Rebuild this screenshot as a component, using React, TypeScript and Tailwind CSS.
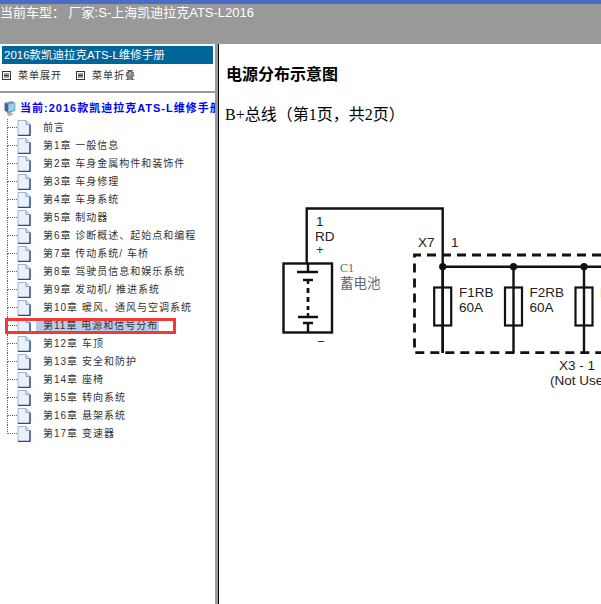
const cn = '"Liberation Sans", "Noto Sans CJK SC", sans-serif';
const serif = '"Liberation Serif", "Noto Sans CJK SC", serif';

const chapters = [
  '前言',
  '第1章 一般信息',
  '第2章 车身金属构件和装饰件',
  '第3章 车身修理',
  '第4章 车身系统',
  '第5章 制动器',
  '第6章 诊断概述、起始点和编程',
  '第7章 传动系统/ 车桥',
  '第8章 驾驶员信息和娱乐系统',
  '第9章 发动机/ 推进系统',
  '第10章 暖风、通风与空调系统',
  '第11章 电源和信号分布',
  '第12章 车顶',
  '第13章 安全和防护',
  '第14章 座椅',
  '第15章 转向系统',
  '第16章 悬架系统',
  '第17章 变速器',
];

function PageIcon() {
  return (
    <svg width="14" height="16" viewBox="0 0 14 16" className="shrink-0">
      <path d="M1 .5H9L13 4.5V15.5H1Z" fill="#eaf1fb" stroke="#9db4dc" />
      <path d="M13 4.5V15.5H1" fill="none" stroke="#2c4a86" strokeWidth="1.4" />
      <path d="M9 .5V4.5H13" fill="#c9d9f2" stroke="#8aa3d0" />
    </svg>
  );
}

function ComputerIcon() {
  return (
    <svg width="14" height="16" viewBox="0 0 14 18" className="shrink-0">
      <path d="M1 2L9 0L13 2V11L5 14L1 11Z" fill="#7c95b8" />
      <path d="M5 4L12 2.5V10L5 12Z" fill="#8fd0f5" />
      <path d="M1 2L5 4V12L1 11Z" fill="#4d6488" />
      <path d="M3 14L8 13L11 15L6 17.5Z" fill="#a4b2c6" />
    </svg>
  );
}

function MenuIcon() {
  return (
    <svg width="9" height="9" viewBox="0 0 9 9" className="shrink-0">
      <rect x=".5" y=".5" width="8" height="8" fill="#fff" stroke="#333" />
      <path d="M2 3H7M2 4.5H7M2 6H7" stroke="#333" />
    </svg>
  );
}

function TreeRow({ label, last, selected }: { label: string; last: boolean; selected: boolean }) {
  return (
    <li className="flex h-[18px] items-center">
      <div className="h-[18px] w-[10px] shrink-0">
        <div className="h-[9px] border-b border-l border-dotted border-[#666]" />
        {!last && <div className="h-[9px] border-l border-dotted border-[#666]" />}
      </div>
      <PageIcon />
      <span
        className={`ml-[5px] h-[14px] whitespace-nowrap pl-[7px] pr-[1px] text-[10px] leading-[14px] tracking-[1px] text-[#333] ${
          selected ? 'bg-[#b9cde6]' : ''
        }`}
      >
        {label}
      </span>
    </li>
  );
}

function Fuse({ x }: { x: number }) {
  return (
    <g>
      <path d={`M${x} 267V353`} stroke="#111" strokeWidth="2.4" fill="none" />
      <rect x={x - 8.5} y="287.5" width="17" height="38" fill="none" stroke="#111" strokeWidth="2.2" />
      <circle cx={x} cy="266.7" r="3.6" fill="#111" />
    </g>
  );
}

function Diagram() {
  return (
    <svg width="382" height="200" viewBox="219 200 382 200" className="block" fontFamily={cn}>
      {/* battery */}
      <path d="M306.7 263V208.5H442.7V353" stroke="#111" strokeWidth="2.4" fill="none" />
      <rect x="283.5" y="263.5" width="48.5" height="69" fill="none" stroke="#111" strokeWidth="2.4" />
      <path d="M297 272H318M303 280H313M308 263V272M308 280V284" stroke="#111" strokeWidth="2.4" fill="none" />
      <path d="M308 288V310" stroke="#111" strokeWidth="2.8" strokeDasharray="5 4" fill="none" />
      <path d="M298 317H318M303 323H313M308 313V317M308 323V332" stroke="#111" strokeWidth="2.4" fill="none" />
      <text x="316" y="226" fontSize="13.5" fill="#222">1</text>
      <text x="315" y="240.5" fontSize="13.5" fill="#222">RD</text>
      <text x="316" y="254" fontSize="13" fill="#333">+</text>
      <text x="317" y="346" fontSize="13" fill="#333">−</text>
      <text x="340" y="272" fontSize="12" fill="#666" fontFamily={serif}>C1</text>
      <text x="340" y="288" fontSize="13.5" fill="#666" fontFamily={serif}>蓄电池</text>
      {/* fuse box */}
      <path d="M601 255H414.5V352.7H601" stroke="#111" strokeWidth="2.8" strokeDasharray="9 6" fill="none" />
      <path d="M442.7 266.7H601" stroke="#111" strokeWidth="2.4" fill="none" />
      <Fuse x={442.7} />
      <Fuse x={513.5} />
      <Fuse x={584} />
      <text x="418" y="247" fontSize="13.5" fill="#222">X7</text>
      <text x="451" y="247" fontSize="13.5" fill="#222">1</text>
      <text x="459" y="297" fontSize="13.5" fill="#222">F1RB</text>
      <text x="459" y="312" fontSize="13.5" fill="#222">60A</text>
      <text x="529.5" y="297" fontSize="13.5" fill="#222">F2RB</text>
      <text x="529.5" y="312" fontSize="13.5" fill="#222">60A</text>
      <text x="600" y="297" fontSize="13.5" fill="#222">F3RB</text>
      <text x="559" y="370" fontSize="13.5" fill="#222">X3 - 1</text>
      <text x="550" y="385" fontSize="13.5" fill="#222">(Not Used)</text>
    </svg>
  );
}

export default function App() {
  return (
    <div className="relative flex h-[604px] w-[601px] flex-col overflow-hidden bg-white" style={{ fontFamily: cn }}>
      {/* top bar */}
      <header className="h-[44px] shrink-0 bg-[#999999]">
        <div className="h-[4px] bg-[#4a6cc4]" />
        <div className="whitespace-nowrap text-[13px] leading-[17px] text-white">当前车型： 厂家:S-上海凯迪拉克ATS-L2016</div>
      </header>

      <div className="flex min-h-0 flex-1">
        {/* left menu */}
        <aside className="w-[215px] shrink-0 overflow-hidden pt-[2px]">
          <div className="mx-[2px] h-[18px] whitespace-nowrap bg-[#006699] pl-[2px] text-[11.5px] font-normal leading-[18px] text-white">
            2016款凯迪拉克ATS-L维修手册
          </div>
          <div className="flex h-[29px] items-center border-b-2 border-[#999] pb-[5px] pl-[2px] text-[10px] tracking-[1px] text-[#333]">
            <MenuIcon />
            <span className="ml-[7px]">菜单展开</span>
            <span className="ml-[14px]">
              <MenuIcon />
            </span>
            <span className="ml-[7px]">菜单折叠</span>
          </div>
          <div className="flex h-[24px] items-end pl-[3px]">
            <ComputerIcon />
            <span className="ml-[3px] whitespace-nowrap text-[11px] font-bold leading-[18px] tracking-[1px] text-[#0000ff]">
              当前:2016款凯迪拉克ATS-L维修手册
            </span>
          </div>
          <ul className="pl-[7px] pt-[2px]">
            {chapters.map((c, i) => (
              <TreeRow key={c} label={c} last={i === chapters.length - 1} selected={i === 11} />
            ))}
          </ul>
        </aside>

        {/* splitter */}
        <div className="w-[3px] shrink-0 bg-[#999]" />
        <div className="w-px shrink-0 bg-black" />

        {/* content */}
        <main className="min-w-0 flex-1 overflow-hidden text-black" style={{ fontFamily: serif }}>
          <h3 className="ml-[7px] mt-[22px] text-[16px] font-bold leading-[18px]">电源分布示意图</h3>
          <p className="ml-[6px] mt-[22px] whitespace-nowrap text-[16px] leading-[18px]">B+总线（第1页，共2页）</p>
          <div className="mt-[76px]">
            <Diagram />
          </div>
        </main>
      </div>

      {/* annotation around the selected chapter */}
      <div className="absolute left-[5px] top-[318px] h-[16px] w-[171px] border-[3px] border-[#f03a3a]" />
    </div>
  );
}
